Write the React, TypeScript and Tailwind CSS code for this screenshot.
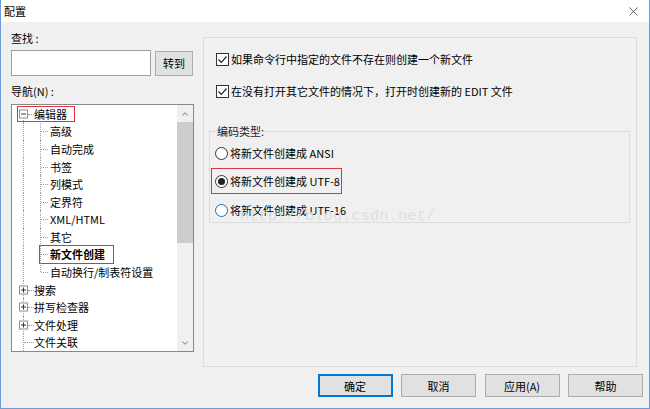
import { X, ChevronUp, ChevronDown } from 'lucide-react'

type Node = { label: string; level: 0 | 1; expander?: '-' | '+'; last?: boolean; bold?: boolean; mark?: boolean }

const tree: Node[] = [
  { label: '编辑器', level: 0, expander: '-', mark: true },
  { label: '高级', level: 1 },
  { label: '自动完成', level: 1 },
  { label: '书签', level: 1 },
  { label: '列模式', level: 1 },
  { label: '定界符', level: 1 },
  { label: 'XML/HTML', level: 1 },
  { label: '其它', level: 1 },
  { label: '新文件创建', level: 1, bold: true, mark: true },
  { label: '自动换行/制表符设置', level: 1, last: true },
  { label: '搜索', level: 0, expander: '+' },
  { label: '拼写检查器', level: 0, expander: '+' },
  { label: '文件处理', level: 0, expander: '+' },
  { label: '文件关联', level: 0 },
]

function Expander({ sign }: { sign: '-' | '+' }) {
  return (
    <span className="absolute left-[7px] top-1/2 -translate-y-1/2 w-[9px] h-[9px] border border-[#919191] bg-white flex items-center justify-center">
      <span className="absolute w-[5px] h-px bg-[#333]" />
      {sign === '+' && <span className="absolute w-px h-[5px] bg-[#333]" />}
    </span>
  )
}

function TreeRow({ node, index }: { node: Node; index: number }) {
  return (
    <div className="relative flex items-center h-[17.7px] whitespace-nowrap">
      {/* outer guide column */}
      <div className="relative w-[22px] h-full shrink-0">
        <span
          className={
            index === 0
              ? 'absolute left-[11px] top-[13px] bottom-0 border-l border-dotted border-[#a0a0a0]'
              : 'absolute left-[11px] top-0 bottom-0 border-l border-dotted border-[#a0a0a0]'
          }
        />
        {node.level === 0 && (
          <span
            className={
              node.expander
                ? 'absolute left-[16px] right-0 top-1/2 border-t border-dotted border-[#a0a0a0]'
                : 'absolute left-[12px] right-0 top-1/2 border-t border-dotted border-[#a0a0a0]'
            }
          />
        )}
        {node.expander && <Expander sign={node.expander} />}
      </div>
      {node.level === 1 && (
        <div className="relative w-[16px] h-full shrink-0">
          <span
            className={
              node.last
                ? 'absolute left-[6px] top-0 h-1/2 border-l border-dotted border-[#a0a0a0]'
                : 'absolute left-[6px] top-0 bottom-0 border-l border-dotted border-[#a0a0a0]'
            }
          />
          <span className="absolute left-[7px] w-[7px] top-1/2 border-t border-dotted border-[#a0a0a0]" />
        </div>
      )}
      <span className={node.bold ? 'font-bold text-black' : 'text-black'}>{node.label}</span>
      {node.mark && index === 0 && (
        <span className="absolute left-[5px] top-px w-[58px] h-[16px] border border-[#e0333c]" />
      )}
      {node.mark && index !== 0 && (
        <span className="absolute left-[27px] -top-px w-[75px] h-[19px] border border-[#e0333c]" />
      )}
    </div>
  )
}

function Checkbox() {
  return (
    <span className="w-[13px] h-[13px] border border-[#333] bg-white flex items-center justify-center shrink-0">
      <svg width="11" height="11" viewBox="0 0 11 11">
        <path d="M1.5 5.5 L4.3 8.3 L9.5 2.5" fill="none" stroke="#222" strokeWidth="1.2" />
      </svg>
    </span>
  )
}

function Radio({ checked, hover }: { checked?: boolean; hover?: boolean }) {
  return (
    <span
      className={
        hover
          ? 'w-[13px] h-[13px] rounded-full border border-[#0078d7] bg-white flex items-center justify-center shrink-0'
          : 'w-[13px] h-[13px] rounded-full border border-[#333] bg-white flex items-center justify-center shrink-0'
      }
    >
      {checked && <span className="w-[7px] h-[7px] rounded-full bg-[#222]" />}
    </span>
  )
}

function Button({ label, primary }: { label: string; primary?: boolean }) {
  return (
    <div
      className={
        primary
          ? 'w-[75px] h-[23px] bg-[#e1e1e1] border-2 border-[#0078d7] flex items-center justify-center'
          : 'w-[75px] h-[23px] bg-[#e1e1e1] border border-[#adadad] flex items-center justify-center'
      }
    >
      {label}
    </div>
  )
}

export default function App() {
  return (
    <div className="w-[650px] h-[409px] bg-[#f0f0f0] flex flex-col border-x border-b border-[#6f9bd9] text-[11px] leading-[16px] text-black overflow-hidden font-['Noto_Sans_CJK_SC','Noto_Sans',sans-serif]">
      {/* title bar */}
      <div className="h-[22px] bg-white flex items-center justify-between pl-[3px] pr-[8px] shrink-0">
        <span className="text-[11px]">配置</span>
        <X size={15} strokeWidth={1} className="text-[#111]" />
      </div>

      <div className="flex pl-[10px]">
        {/* left column */}
        <div className="w-[183px] flex flex-col">
          <div className="mt-[8px] mb-[4px]">查找 :</div>
          <div className="flex items-center gap-[4px]">
            <div className="w-[140px] h-[26px] bg-white border border-[#a0a0a0]" />
            <div className="w-[38px] h-[25px] bg-[#e1e1e1] border border-[#adadad] flex items-center justify-center">
              转到
            </div>
          </div>
          <div className="mt-[7px] mb-[5px]">导航(N) :</div>
          <div className="h-[248px] bg-white border border-[#828790] flex">
            <div className="flex-1 flex flex-col overflow-hidden">
              {tree.map((n, i) => (
                <TreeRow key={n.label} node={n} index={i} />
              ))}
            </div>
            <div className="w-[16px] bg-[#f0f0f0] flex flex-col items-center">
              <div className="h-[17px] flex items-center justify-center text-[#606060]">
                <ChevronUp size={10} strokeWidth={2} />
              </div>
              <div className="w-full h-[121px] bg-[#cdcdcd]" />
              <div className="flex-1" />
              <div className="h-[17px] flex items-center justify-center text-[#606060]">
                <ChevronDown size={10} strokeWidth={2} />
              </div>
            </div>
          </div>
        </div>

        {/* right panel */}
        <div className="relative ml-[9px] mt-[15px] w-[434px] h-[330px] border border-[#dcdcdc] flex flex-col">
          <div className="flex items-center gap-[2px] pl-[12px] mt-[13px] h-[16px]">
            <Checkbox />
            <span>如果命令行中指定的文件不存在则创建一个新文件</span>
          </div>
          <div className="flex items-center gap-[2px] pl-[12px] mt-[16px] h-[16px]">
            <Checkbox />
            <span>在没有打开其它文件的情况下，打开时创建新的 EDIT 文件</span>
          </div>

          <fieldset className="ml-[5px] mt-[24px] w-[421px] h-[100px] border border-[#dcdcdc] px-[5px]">
            <legend className="ml-[1px] px-px text-[#222]">编码类型:</legend>
            <div className="flex flex-col">
              <div className="flex items-center gap-[2px] h-[16px] mt-[6px]">
                <Radio />
                <span>将新文件创建成 ANSI</span>
              </div>
              <div className="relative flex items-center gap-[2px] h-[16px] mt-[12px]">
                <Radio checked />
                <span>将新文件创建成 UTF-8</span>
                <span className="absolute -left-[4px] -top-[5px] w-[131px] h-[26px] border border-[#e0333c]" />
              </div>
              <div className="flex items-center gap-[2px] h-[16px] mt-[13px]">
                <Radio hover />
                <span>将新文件创建成 UTF-16</span>
              </div>
            </div>
          </fieldset>

          {/* watermark */}
          <span className="absolute left-[36px] top-[170px] text-[15px] leading-[18px] font-['Liberation_Mono',monospace] text-[#dedede] tracking-[0.3px] pointer-events-none">
            http://blog.csdn.net/
          </span>
        </div>
      </div>

      <div className="flex justify-end gap-[8.5px] pr-[6px] mt-[7px]">
        <Button label="确定" primary />
        <Button label="取消" />
        <Button label="应用(A)" />
        <Button label="帮助" />
      </div>
    </div>
  )
}
